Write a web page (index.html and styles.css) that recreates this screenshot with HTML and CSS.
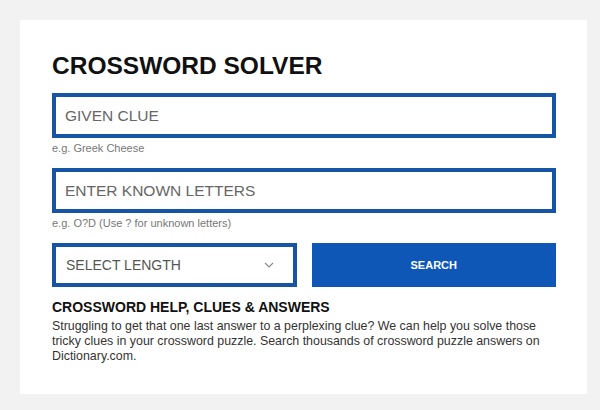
FILE: index.html
```html
<!DOCTYPE html>
<html lang="en">
<head>
<meta charset="utf-8">
<title>Crossword Solver</title>
<link rel="stylesheet" href="styles.css">
</head>
<body>
<main class="card">
  <h1 class="title">CROSSWORD SOLVER</h1>
  <input class="field" type="text" placeholder="GIVEN CLUE">
  <p class="hint">e.g. Greek Cheese</p>
  <input class="field" type="text" placeholder="ENTER KNOWN LETTERS">
  <p class="hint">e.g. O?D (Use ? for unknown letters)</p>
  <div class="row">
    <div class="select">
      <span>SELECT LENGTH</span>
      <svg class="chev" width="10" height="6" viewBox="0 0 10 6"><polyline points="1,1 5,5 9,1" fill="none" stroke="#8a8a8a" stroke-width="1.2"/></svg>
    </div>
    <button class="search" type="button">SEARCH</button>
  </div>
  <h2 class="subtitle">CROSSWORD HELP, CLUES &amp; ANSWERS</h2>
  <p class="text">Struggling to get that one last answer to a perplexing clue? We can help you solve those tricky clues in your crossword puzzle. Search thousands of crossword puzzle answers on Dictionary.com.</p>
</main>
</body>
</html>
```
FILE: styles.css
```css
html, body {
  margin: 0;
  padding: 0;
}
body {
  background: #f2f2f2;
  font-family: "Liberation Sans", Arial, sans-serif;
  padding: 20px 13px 16px 20px;
}
.card {
  background: #ffffff;
  width: 567px;
  height: 374px;
  box-sizing: border-box;
  padding: 32px 31px 0 32px;
  display: flex;
  flex-direction: column;
}
.title {
  margin: 0;
  font-size: 24.5px;
  line-height: 28px;
  font-weight: 700;
  color: #111;
}
.field {
  margin: 13px 0 0;
  box-sizing: border-box;
  height: 45px;
  width: 100%;
  border: 4px solid #1654a6;
  padding: 0 0 0 9px;
  font-family: "Liberation Sans", Arial, sans-serif;
  font-size: 15.5px;
  color: #333;
  outline: none;
  background: #fff;
}
.field::placeholder {
  color: #666;
  opacity: 1;
}
.hint {
  margin: 4px 0 0;
  font-size: 11px;
  line-height: 13px;
  color: #777;
}
.row {
  margin-top: 13px;
  display: grid;
  grid-template-columns: 1fr 1fr;
  gap: 15px;
  height: 44px;
}
.select {
  box-sizing: border-box;
  border: 4px solid #1654a6;
  display: flex;
  align-items: center;
  justify-content: space-between;
  padding: 0 19px 0 10px;
  font-size: 14px;
  color: #555;
}
.chev {
  display: block;
}
.search {
  border: 0;
  margin: 0;
  background: #0f57b6;
  color: #fff;
  font-family: "Liberation Sans", Arial, sans-serif;
  font-weight: 700;
  font-size: 11px;
}
.subtitle {
  margin: 12px 0 0;
  font-size: 14px;
  line-height: 16px;
  font-weight: 700;
  color: #111;
}
.text {
  margin: 4px 0 0;
  font-size: 12.4px;
  line-height: 15px;
  color: #333;
}
```
